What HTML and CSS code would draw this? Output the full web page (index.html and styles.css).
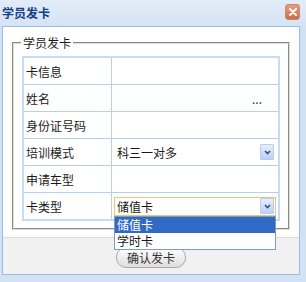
FILE: index.html
```html
<!DOCTYPE html>
<html lang="zh-CN">
<head>
  <meta charset="UTF-8"/>
  <title>学员发卡</title>
  <link rel="stylesheet" href="styles.css">
</head>
<body>
  <div class="window">
    <div class="titlebar">
      <span class="title">学员发卡</span>
      <span class="close">
        <svg width="8" height="8" viewBox="0 0 8 8"><path d="M1 1L7 7M7 1L1 7" stroke="#fff" stroke-width="2" stroke-linecap="round"/></svg>
      </span>
    </div>

    <div class="panel">
      <div class="content">
        <fieldset class="group">
          <legend>学员发卡</legend>
          <table class="form">
            <tr><td class="label">卡信息</td><td></td></tr>
            <tr><td class="label">姓名</td><td class="more">...</td></tr>
            <tr><td class="label">身份证号码</td><td></td></tr>
            <tr>
              <td class="label">培训模式</td>
              <td>
                <div class="select plain">
                  <span>科三一对多</span>
                  <span class="arrow"><svg width="7" height="5" viewBox="0 0 7 5"><path d="M1 1L3.5 3.5L6 1" fill="none" stroke="#3c4f73" stroke-width="1.6"/></svg></span>
                </div>
              </td>
            </tr>
            <tr><td class="label">申请车型</td><td></td></tr>
            <tr>
              <td class="label">卡类型</td>
              <td>
                <div class="select focus">
                  <span>储值卡</span>
                  <span class="arrow"><svg width="7" height="5" viewBox="0 0 7 5"><path d="M1 1L3.5 3.5L6 1" fill="none" stroke="#3c4f73" stroke-width="1.6"/></svg></span>
                  <ul class="options">
                    <li class="active">储值卡</li>
                    <li>学时卡</li>
                  </ul>
                </div>
              </td>
            </tr>
          </table>
        </fieldset>
      </div>
      <div class="footer">
        <button class="confirm">确认发卡</button>
      </div>
    </div>
  </div>
</body>
</html>
```

FILE: styles.css
```css
body {
  margin: 0;
  font-family: "Noto Sans CJK SC", "Liberation Sans", sans-serif;
  font-size: 12px;
  color: #1a1a1a;
}

.window {
  width: 306px;
  height: 282px;
  box-sizing: border-box;
  padding: 0 6px 0 2px;
  background: #d3e1f4;
}

.titlebar {
  height: 26px;
  display: flex;
  align-items: center;
  justify-content: space-between;
  background: linear-gradient(#e3ecf8, #d6e3f5);
  margin: 0 -6px 0 -2px;
  padding: 0 6px 0 2px;
}

.title {
  font-weight: bold;
  color: #15428b;
  line-height: 14px;
}

.close {
  width: 13px;
  height: 14px;
  margin-top: -2px;
  border: 1px solid #c88870;
  border-radius: 3px;
  background: linear-gradient(#e99b7d, #cf6c4c);
  display: flex;
  align-items: center;
  justify-content: center;
}

.panel {
  height: 249px;
  box-sizing: border-box;
  border: 1px solid #99bbe8;
  background: #fff;
  display: flex;
  flex-direction: column;
}

.content {
  height: 210px;
  box-sizing: border-box;
  padding: 8px 9px 0 9px;
}

.group {
  margin: 0;
  padding: 5px 7px 7px 8px;
  border: 2px groove #e0ddd2;
}

.group legend {
  padding: 0 2px;
  margin-left: -1px;
  line-height: 16px;
}

.form {
  width: 258px;
  border-collapse: collapse;
  border: 2px solid #c6dbf5;
}

.form td {
  height: 26px;
  padding: 0 2px;
  border: 1px solid #b5cff0;
}

.form td.label {
  width: 83px;
}

.more {
  text-align: right;
  padding-right: 16px !important;
  color: #333;
}

.select {
  position: relative;
  height: 19px;
  box-sizing: border-box;
  display: flex;
  align-items: center;
  justify-content: space-between;
  padding-left: 2px;
}

.select.plain {
  border: 1px solid transparent;
}

.select.focus {
  border: 1px solid #f2c46c;
}

.arrow {
  width: 12px;
  height: 14px;
  margin-right: 1px;
  border: 1px solid #b6cdf2;
  border-radius: 1px;
  background: linear-gradient(#e6eefd, #bcd0f6);
  display: flex;
  align-items: center;
  justify-content: center;
}

.options {
  position: absolute;
  left: -1px;
  right: -1px;
  top: 18px;
  margin: 0;
  padding: 0;
  list-style: none;
  background: #fff;
  border: 1px solid #7f9db9;
  z-index: 2;
}

.options li {
  height: 16px;
  line-height: 16px;
  padding-left: 2px;
}

.options li.active {
  background: #316ac5;
  color: #fff;
}

.footer {
  flex: 1;
  background: #f1f1f1;
  border-top: 1px solid #dcdcdc;
  display: flex;
  justify-content: center;
  align-items: flex-start;
  padding-top: 9px;
}

.confirm {
  width: 70px;
  height: 21px;
  padding: 0;
  font-family: inherit;
  font-size: 12px;
  color: #333;
  border: 1px solid #a9a9a9;
  border-radius: 10px;
  background: linear-gradient(#ffffff, #dedede);
}
```
